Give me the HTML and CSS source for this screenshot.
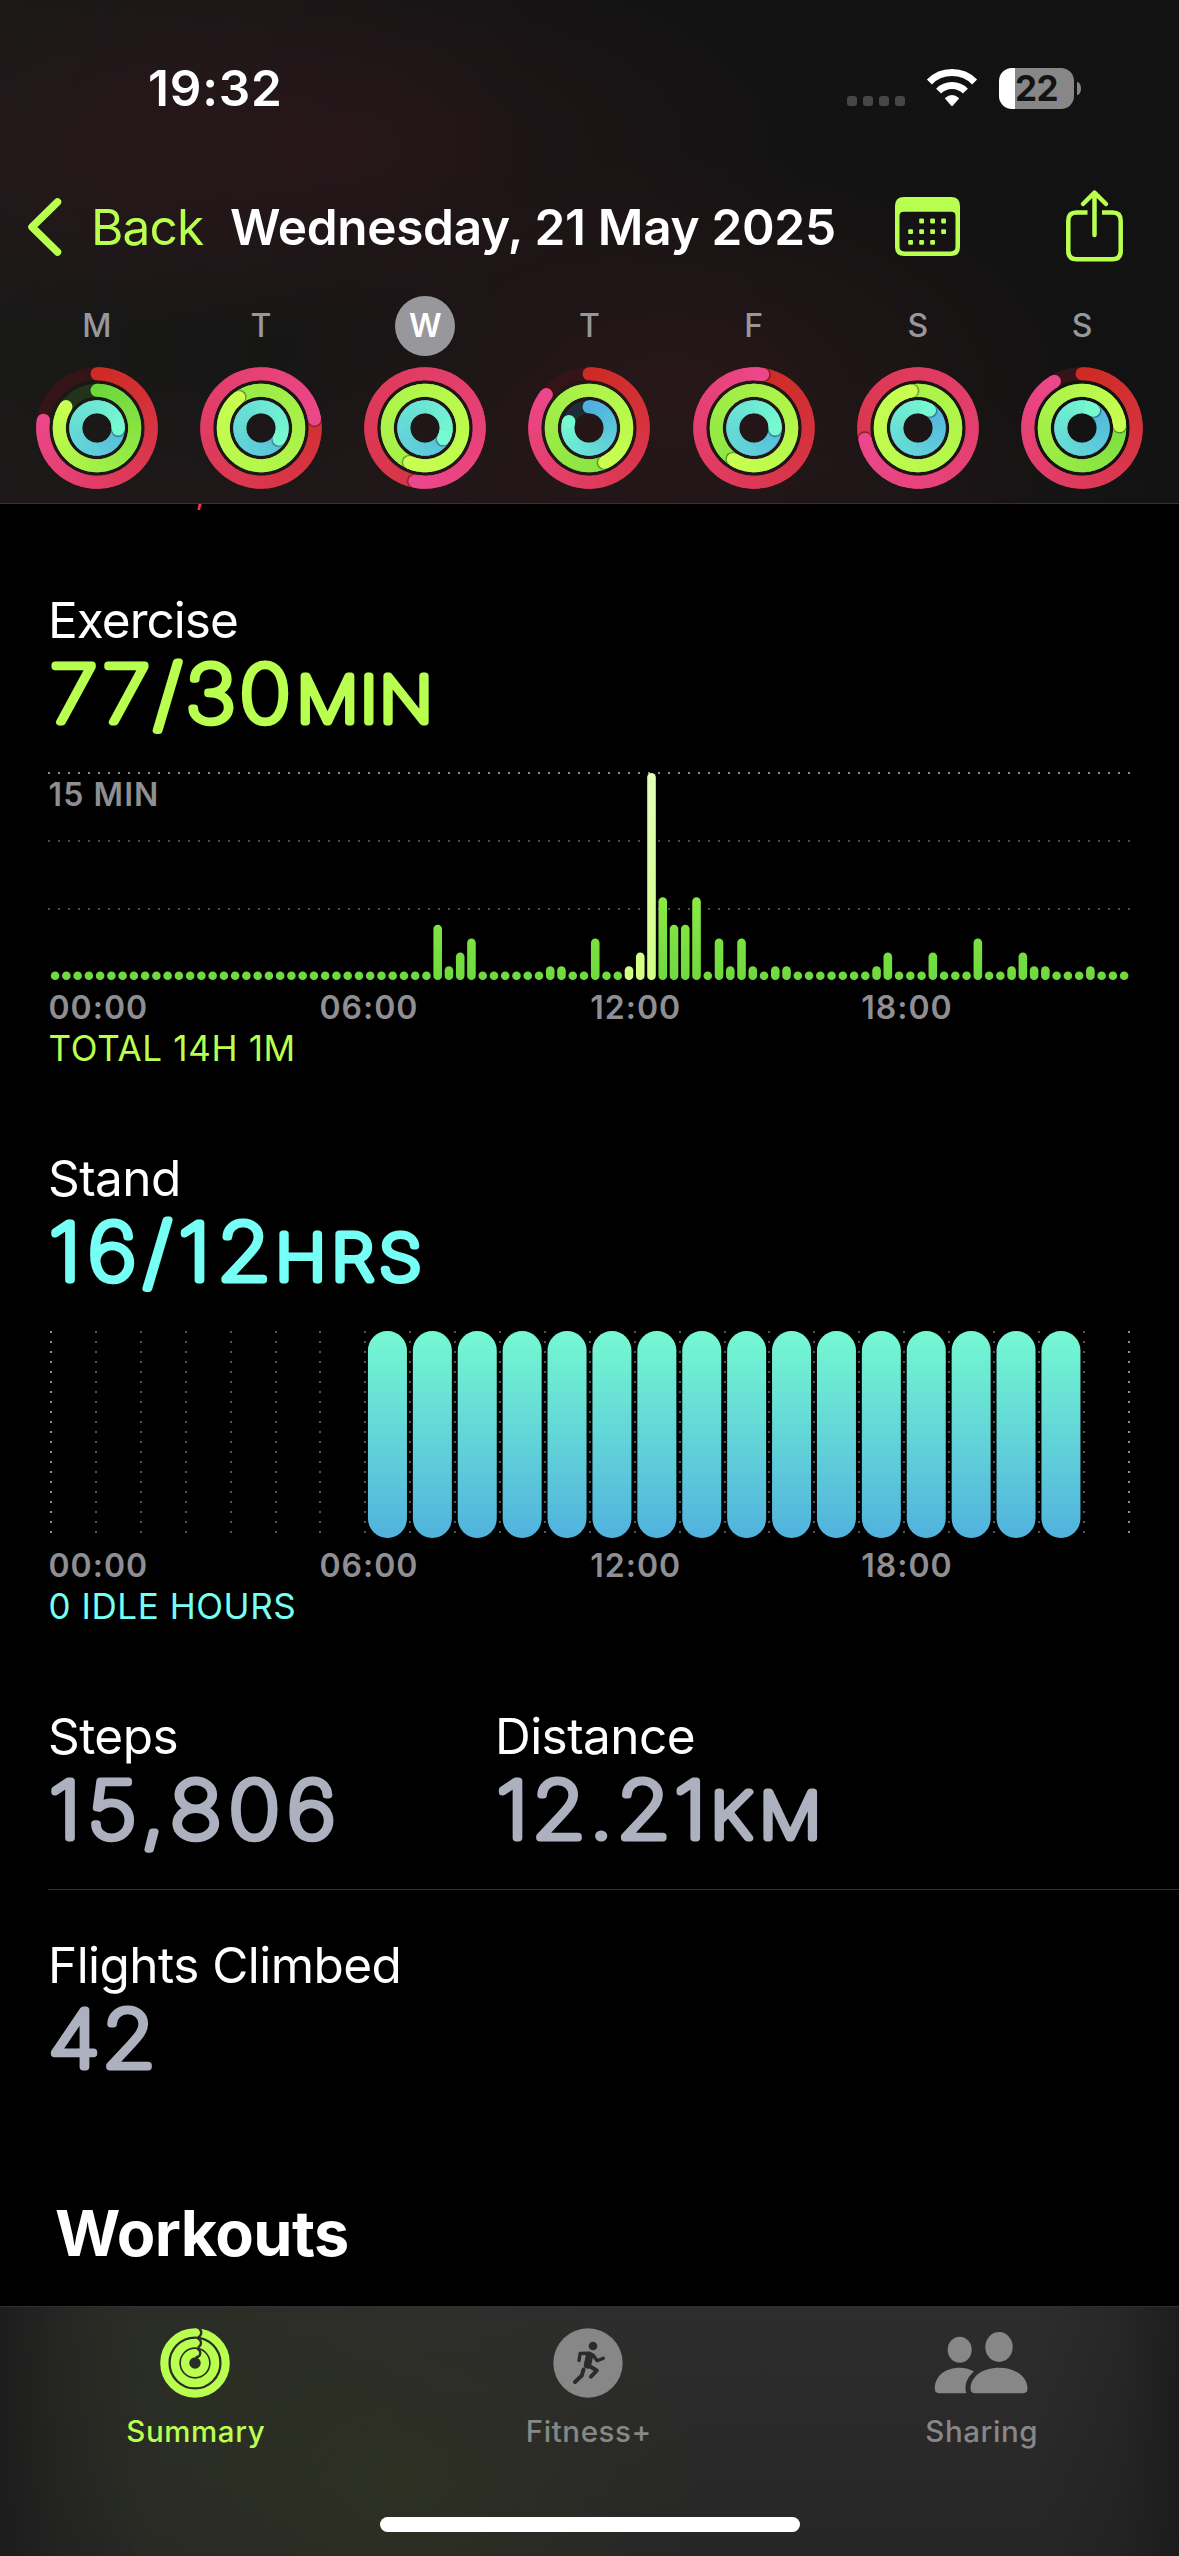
FILE: index.html
```html
<!DOCTYPE html>
<html lang="en">
<head>
<meta charset="utf-8">
<title>Activity Summary</title>
<link rel="stylesheet" href="styles.css">
</head>
<body>
<div class="screen">
  <header class="header">
    <div class="status">
      <span class="time">19:32</span>
      <div class="cell"><i></i><i></i><i></i><i></i></div>
      <svg class="wifi" width="50" height="38" viewBox="0 0 50 38">
        <g fill="none" stroke="#fff" stroke-width="7">
          <path d="M2.4 12.9A32 32 0 0 1 47.6 12.9"/>
          <path d="M11.6 22.1A18.9 18.9 0 0 1 38.4 22.1"/>
        </g>
        <path d="M17.8 29.2Q25 23 32.200 29.200L26 36.400Q25 37.400 24 36.400Z" fill="#fff"/>
      </svg>
      <div class="battery"><span>22</span></div>
      <i class="battery-cap"></i>
    </div>

    <nav class="nav">
      <svg class="chevron" width="40" height="60" viewBox="0 0 40 60"><path d="M31.500 5L6 30L31.500 55" fill="none" stroke="#b9ff50" stroke-width="7.500" stroke-linecap="round" stroke-linejoin="round"/></svg>
      <span class="back">Back</span>
      <h1 class="date">Wednesday, 21 May 2025</h1>
      <svg class="calendar" width="66" height="60" viewBox="0 0 66 60">
        <path fill="#b9ff50" fill-rule="evenodd" d="M9 0H56Q65 0 65 9V50Q65 59 56 59H9Q0 59 0 50V9Q0 0 9 0ZM8.500 14.800Q4.500 14.800 4.500 18.800V49.500Q4.500 54.400 9.400 54.400H55.600Q60.500 54.400 60.500 49.500V18.800Q60.500 14.800 56.500 14.800Z"/>
        <g fill="#b9ff50">
          <rect x="24.200" y="21.600" width="4.800" height="4.800" rx="1"/><rect x="35.200" y="21.600" width="4.800" height="4.800" rx="1"/><rect x="46.200" y="21.600" width="4.800" height="4.800" rx="1"/>
          <rect x="13.200" y="32.200" width="4.800" height="4.800" rx="1"/><rect x="24.200" y="32.200" width="4.800" height="4.800" rx="1"/><rect x="35.200" y="32.200" width="4.800" height="4.800" rx="1"/><rect x="46.200" y="32.200" width="4.800" height="4.800" rx="1"/>
          <rect x="13.200" y="42.900" width="4.800" height="4.800" rx="1"/><rect x="24.200" y="42.900" width="4.800" height="4.800" rx="1"/><rect x="35.200" y="42.900" width="4.800" height="4.800" rx="1"/>
        </g>
      </svg>
      <svg class="share" width="58" height="72" viewBox="0 0 58 72">
        <g fill="none" stroke="#b9ff50" stroke-width="4.500">
          <path d="M21.500 21.500H10.500Q2.300 21.500 2.300 29.700V60Q2.300 68.200 10.500 68.200H46.500Q54.700 68.200 54.700 60V29.700Q54.700 21.500 46.500 21.500H36"/>
          <path d="M28.500 2.500V44M17 13L28.500 1.700L40 13" stroke-linecap="round" stroke-linejoin="round"/>
        </g>
      </svg>
    </nav>

    <div class="week" id="week"></div>
  </header>

  <main class="content">
    <p class="footnote move">TOTAL 2,434KCAL</p>

    <section class="metric">
      <h2 class="label tight">Exercise</h2>
      <svg class="value lime" width="420" height="88"><text x="0" y="72.200" letter-spacing="3.400">77/30</text><text class="unit" x="224.300" y="72.200" letter-spacing="1.900">MIN</text></svg>
      <div class="chart minutes">
        <span class="scale">15 MIN</span>
        <svg class="plot" id="minutes" width="1083" height="208"></svg>
      </div>
      <div class="axis"><span>00:00</span><span>06:00</span><span>12:00</span><span>18:00</span></div>
      <p class="footnote lime">TOTAL 14H 1M</p>
    </section>

    <section class="metric">
      <h2 class="label">Stand</h2>
      <svg class="value aqua" width="420" height="88"><text x="-1" y="72.200" letter-spacing="6.400">16/12</text><text class="unit" x="205" y="72.200" letter-spacing="5">HRS</text></svg>
      <div class="chart">
        <svg class="plot" id="hours" width="1083" height="208"></svg>
      </div>
      <div class="axis"><span>00:00</span><span>06:00</span><span>12:00</span><span>18:00</span></div>
      <p class="footnote aqua idle">0 IDLE HOURS</p>
    </section>

    <section class="metric pair">
      <div>
        <h2 class="label">Steps</h2>
        <svg class="value slate" width="420" height="88"><text x="-1" y="72.200" letter-spacing="6.500">15,806</text></svg>
      </div>
      <div>
        <h2 class="label">Distance</h2>
        <svg class="value slate" width="420" height="88"><text x="-0.500" y="72.200" letter-spacing="3.500">12.21</text><text class="unit" x="194.300" y="72.200" letter-spacing="7">KM</text></svg>
      </div>
    </section>

    <section class="metric flights">
      <h2 class="label">Flights Climbed</h2>
      <svg class="value slate" width="420" height="88"><text x="-1.500" y="72.200" letter-spacing="2">42</text></svg>
    </section>

    <h2 class="workouts">Workouts</h2>
  </main>

  <footer class="tabbar">
    <div class="tabs">
      <div class="tab active">
        <svg width="70" height="70" viewBox="-35 -35 70 70">
          <g fill="none" stroke="#b9ff50">
            <circle r="30.700" stroke-width="8.200"/><circle r="20" stroke-width="8.600"/><circle r="9.900" stroke-width="8.300"/>
          </g>
          <path d="M2.500 -36Q6.300 -33.500 6.300 -30.500Q6.300 -27.500 3 -25.500M2.500 -25Q6 -23 6 -20Q6 -17.500 3 -15.500M2 -14.500Q5.300 -13 5.300 -10Q5.300 -6 0.500 -5.700" fill="none" stroke="#2b2e26" stroke-width="2.300"/>
        </svg>
        <span>Summary</span>
      </div>
      <div class="tab">
        <svg width="70" height="70" viewBox="-35 -35 70 70">
          <circle r="34.700" fill="#868786"/>
          <g fill="none" stroke="#2b2b2b" stroke-linecap="round" stroke-linejoin="round">
            <circle cx="5" cy="-17" r="4.300" fill="#2b2b2b" stroke="none"/>
            <path d="M1.500 -7.500L-0.500 2" stroke-width="7.400"/>
            <path d="M1.500 -9.800L-7.800 -9.500L-9 -2.500M5 -8L9.200 -2.200L15.300 -4.700" stroke-width="3.400"/>
            <path d="M0.500 2.500L8.800 7.500L3 13.700" stroke-width="4"/>
            <path d="M-4.500 6.500L-6.200 12.500L-13 19" stroke-width="4"/>
          </g>
        </svg>
        <span>Fitness+</span>
      </div>
      <div class="tab">
        <svg width="94" height="70" viewBox="0 0 94 70">
          <g fill="#868786">
            <ellipse cx="65" cy="19" rx="13.700" ry="15"/>
            <ellipse cx="25.700" cy="21.700" rx="12" ry="13"/>
            <path d="M36.500 60.500C36.500 49 48 39.700 65 39.700S93.500 49 93.500 60.500Q93.500 65.300 88.500 65.300H41.500Q36.500 65.300 36.500 60.500Z"/>
            <path d="M0.800 60.500C0.800 49 10 39.700 25.700 39.700Q34 39.700 40 43.500C34.500 48 31.500 54 31.500 60Q31.500 63 32.300 65.300H5.500Q0.800 65.300 0.800 60.500Z"/>
          </g>
        </svg>
        <span>Sharing</span>
      </div>
    </div>
    <i class="home"></i>
  </footer>
</div>
<script src="app.js"></script>
</body>
</html>
```
FILE: styles.css
```css
* { box-sizing: border-box; margin: 0; padding: 0; }

body {
  background: #000;
  color: #fff;
  font-family: Inter, "Liberation Sans", sans-serif;
}

svg { display: block; overflow: visible; flex: none; }

.screen {
  width: 1179px;
  height: 2556px;
  display: flex;
  flex-direction: column;
  overflow: hidden;
}

/* Header */
.header {
  height: 504px;
  flex: none;
  padding-top: 58px;
  border-bottom: 1px solid #333131;
  background:
    radial-gradient(ellipse 380px 200px at 150px 145px, rgba(42, 23, 27, .6), rgba(42, 23, 27, 0)),
    radial-gradient(ellipse 460px 200px at 350px 145px, rgba(42, 22, 26, .75), rgba(42, 22, 26, 0)),
    radial-gradient(ellipse 420px 240px at 670px 390px, rgba(42, 23, 25, .9), rgba(42, 23, 25, 0)),
    radial-gradient(ellipse 900px 140px at 400px 500px, rgba(34, 24, 26, .8), rgba(34, 24, 26, 0)),
    linear-gradient(90deg, #191918, #131313 45%, #121212);
}

.status {
  height: 60px;
  display: flex;
  align-items: center;
  padding: 0 98px 0 148px;
}

.time { font-size: 49.5px; font-weight: 600; line-height: 60px; letter-spacing: .8px; }

.cell { display: flex; gap: 6px; margin: 26px 22px 0 auto; }
.cell i { width: 10px; height: 10px; border-radius: 3px; background: #474747; }

.wifi { margin-right: 22.500px; }

.battery {
  width: 75px;
  height: 41px;
  border-radius: 13px;
  background: linear-gradient(90deg, #fff 16.500px, #878787 16.500px);
  text-align: center;
}
.battery span { color: #131313; font-size: 35px; font-weight: 700; line-height: 41px; letter-spacing: -.5px; }
.battery-cap { width: 4px; height: 13px; margin-left: 3px; border-radius: 0 4px 4px 0 / 0 7px 7px 0; background: #878787; }

.nav {
  display: flex;
  align-items: center;
  height: 60px;
  margin-top: 79px;
  padding-left: 25.500px;
}
.back { margin-left: 25.500px; width: 139px; color: #b9ff50; font-size: 49.5px; line-height: 60px; letter-spacing: -.8px; }
.date { width: 665px; font-size: 49.5px; font-weight: 600; line-height: 60px; letter-spacing: -.3px; white-space: nowrap; }
.calendar { margin-right: 105px; }

.week {
  display: grid;
  grid-template-columns: repeat(7, 1fr);
  justify-items: center;
  padding: 0 14.7px;
  margin-top: 39px;
}
.day { display: flex; flex-direction: column; align-items: center; gap: 11px; }
.day span {
  width: 60px;
  height: 60px;
  border-radius: 50%;
  color: #98979c;
  font-size: 32px;
  font-weight: 500;
  line-height: 59px;
  text-align: center;
}
.day .today { background: #98979c; color: #fff; font-weight: 600; }

/* Scrolling content */
.content { flex: 1; min-height: 0; overflow: hidden; padding-left: 48px; }

.label { font-size: 49.5px; font-weight: 400; line-height: 60px; letter-spacing: -.55px; white-space: nowrap; }
.tight { letter-spacing: -.96px; }

.value { height: 88px; margin-left: 2px; }
.value text {
  transform: scale(1.1, 1);
  font-size: 78.6px;
  font-weight: 100;
  fill: currentColor;
  stroke: currentColor;
  stroke-width: 7px;
  stroke-linejoin: round;
}
.value .unit { font-size: 62.5px; }

.lime { color: #b9ff50; }
.aqua { color: #76fff5; }
.slate { color: #adb1bf; }
.move { color: #e23b5f; margin-top: -33.700px; margin-bottom: 78px; }

.chart { height: 208px; margin-top: 34px; display: grid; }
.chart > * { grid-area: 1 / 1; }
.scale { padding: 2.400px 0 0 .5px; color: #8e8e93; font-size: 32px; font-weight: 600; line-height: 40px; letter-spacing: 1.1px; }

.axis {
  display: grid;
  grid-template-columns: repeat(4, 270.9px);
  margin-top: 8px;
  margin-bottom: -1px;
  padding-left: .5px;
  color: #8e8e93;
  font-size: 32px;
  font-weight: 600;
  line-height: 40px;
  letter-spacing: 1px;
}

.footnote { padding-left: .5px; font-size: 35px; line-height: 42px; letter-spacing: .68px; white-space: nowrap; }
.idle { letter-spacing: .56px; }

.metric + .metric { margin-top: 79px; }

.pair { display: grid; grid-template-columns: 447px 1fr; padding-bottom: 35px; border-bottom: 1px solid #303032; }
.content .flights { margin-top: 45px; }

.workouts { margin-top: 112px; padding-left: 7px; font-size: 63px; line-height: 76px; letter-spacing: -.59px; }

/* Tab bar */
.tabbar {
  height: 250px;
  flex: none;
  display: flex;
  flex-direction: column;
  align-items: center;
  justify-content: space-between;
  padding: 21px 0 24px;
  border-top: 1px solid #303030;
  background:
    linear-gradient(90deg, rgba(26, 26, 26, .85), rgba(26, 26, 26, .35) 5%, rgba(26, 26, 26, 0) 12%, rgba(26, 26, 26, 0) 88%, rgba(26, 26, 26, .3) 95%, rgba(26, 26, 26, .85)),
    radial-gradient(ellipse 300px 240px at 400px 180px, rgba(46, 49, 35, .9), rgba(46, 49, 35, 0)),
    radial-gradient(ellipse 260px 240px at 180px 90px, rgba(42, 46, 34, .9), rgba(42, 46, 34, 0)),
    linear-gradient(180deg, #2d2d2d, #262626);
}
.tabs { width: 100%; display: grid; grid-template-columns: repeat(3, 1fr); }
.tab { display: flex; flex-direction: column; align-items: center; gap: 15px; color: #868786; }
.tab svg { margin-right: 2.500px; }
.tab span { margin-right: 1.500px; font-size: 29.5px; font-weight: 500; line-height: 36px; letter-spacing: .6px; }
.active { color: #b9ff50; }
.home { width: 420px; height: 15px; border-radius: 8px; background: #fff; }
```
FILE: app.js
```javascript
const NS = 'http://www.w3.org/2000/svg';

function add(parent, tag, attrs) {
  const el = document.createElementNS(NS, tag);
  for (const key in attrs) el.setAttribute(key, attrs[key]);
  parent.appendChild(el);
  return el;
}

// Activity rings: progress is in laps, so 1.5 is a full ring and a half.
const RINGS = [
  { r: 54.2, from: [205, 43, 35], to: [236, 71, 138], track: '#351417' },
  { r: 37.7, from: [108, 216, 60], to: [200, 255, 80], track: '#21331a' },
  { r: 21.2, from: [80, 176, 224], to: [118, 250, 208], track: '#1d2d36' }
];
const WIDTH = 13;

const DAYS = [
  ['M', 0.773, 0.846, 1.258],
  ['T', 1.224, 1.9, 1.338],
  ['W', 1.53, 2.567, 1.335],
  ['T', 0.856, 1.432, 0.8],
  ['F', 1.026, 1.593, 1.258],
  ['S', 1.717, 2.972, 1.092],
  ['S', 0.915, 1.24, 1.092]
];

function mix(ring, t) {
  return 'rgb(' + ring.from.map((c, i) => Math.round(c + (ring.to[i] - c) * t)).join(',') + ')';
}

function point(r, lap) {
  const a = lap * 2 * Math.PI;
  return [r * Math.sin(a), -r * Math.cos(a)];
}

function drawRing(svg, ring, progress, id) {
  add(svg, 'circle', { r: ring.r, fill: 'none', stroke: ring.track, 'stroke-width': WIDTH });
  const start = Math.max(0, progress - 1);
  const steps = 120;
  if (start === 0) {
    const [x, y] = point(ring.r, 0);
    add(svg, 'circle', { cx: x, cy: y, r: WIDTH / 2, fill: mix(ring, 0) });
  }
  for (let i = 0; i < steps; i++) {
    const a = start + (progress - start) * i / steps;
    const b = Math.min(progress, a + (progress - start) / steps + 0.006);
    const [x1, y1] = point(ring.r, a);
    const [x2, y2] = point(ring.r, b);
    add(svg, 'path', {
      d: `M${x1} ${y1}A${ring.r} ${ring.r} 0 0 1 ${x2} ${y2}`,
      fill: 'none', stroke: mix(ring, a / progress), 'stroke-width': WIDTH
    });
  }
  const [hx, hy] = point(ring.r, progress);
  if (progress > 1) {
    const clip = add(svg, 'clipPath', { id });
    const o = ring.r + WIDTH / 2;
    const n = ring.r - WIDTH / 2;
    add(clip, 'path', {
      'clip-rule': 'evenodd',
      d: `M0 ${-o}A${o} ${o} 0 1 1 0 ${o}A${o} ${o} 0 1 1 0 ${-o}ZM0 ${-n}A${n} ${n} 0 1 1 0 ${n}A${n} ${n} 0 1 1 0 ${-n}Z`
    });
    const [sx, sy] = point(ring.r, progress + 0.8 / (2 * Math.PI * ring.r));
    const shade = add(svg, 'g', { 'clip-path': `url(#${id})` });
    add(shade, 'circle', { cx: sx, cy: sy, r: 7.6, fill: '#000', opacity: 0.14 });
    add(shade, 'circle', { cx: sx, cy: sy, r: 6.8, fill: '#000', opacity: 0.3 });
    // The shadow must only fall ahead of the head, so the tail is painted back over it.
    const [bx, by] = point(ring.r, progress - 9 / (2 * Math.PI * ring.r));
    add(svg, 'path', {
      d: `M${bx} ${by}A${ring.r} ${ring.r} 0 0 1 ${hx} ${hy}`,
      fill: 'none', stroke: mix(ring, 0.985), 'stroke-width': WIDTH
    });
  }
  add(svg, 'circle', { cx: hx, cy: hy, r: WIDTH / 2, fill: mix(ring, 1) });
}

const week = document.getElementById('week');
DAYS.forEach(([name, ...laps], d) => {
  const day = document.createElement('div');
  day.className = 'day';
  const label = document.createElement('span');
  label.textContent = name;
  if (d === 2) label.className = 'today';
  day.appendChild(label);
  const svg = add(day, 'svg', { width: 122, height: 122, viewBox: '-61 -61 122 122' });
  RINGS.forEach((ring, i) => drawRing(svg, ring, laps[i], `ring-${d}-${i}`));
  week.appendChild(day);
});

// Exercise minutes in 15-minute slots, midnight to midnight.
const minutes = new Array(96).fill(0);
Object.assign(minutes, {
  34: 4, 35: 1, 36: 2, 37: 3, 44: 1, 45: 1, 48: 3, 51: 1, 52: 2, 53: 15, 54: 6, 55: 4,
  56: 4, 57: 6, 59: 3, 60: 1, 61: 3, 62: 1, 64: 1, 65: 1, 73: 1, 74: 2, 78: 2, 82: 3,
  85: 1, 86: 2, 87: 1, 88: 1, 92: 1
});

function gradient(svg, id, bottom, top) {
  const g = add(svg, 'linearGradient', { id, gradientUnits: 'userSpaceOnUse', x1: 0, y1: 208, x2: 0, y2: 0 });
  add(g, 'stop', { offset: 0, 'stop-color': bottom });
  add(g, 'stop', { offset: 1, 'stop-color': top });
}

const plot = document.getElementById('minutes');
gradient(plot, 'move-bar', '#6ed93e', '#b9ff50');
gradient(plot, 'workout-bar', '#d3ff84', '#e3ffba');
[[1, '#8f8f8f'], [69, '#4d4d4d'], [137, '#4d4d4d']].forEach(([y, stroke]) => {
  add(plot, 'path', { d: `M0 ${y}H1082`, stroke, 'stroke-width': 2, 'stroke-dasharray': '2 8' });
});
minutes.forEach((value, i) => {
  const h = value ? value * 13.8 : 8.6;
  const fill = i >= 51 && i <= 53 ? 'url(#workout-bar)' : 'url(#move-bar)';
  add(plot, 'rect', { x: 7.1 + i * 11.253 - 4.3, y: 208 - h, width: 8.6, height: h, rx: 4.3, fill });
});

// Stand hours: the slots with at least one minute on foot.
const hours = document.getElementById('hours');
gradient(hours, 'stand-bar', '#51b2de', '#75f9d1');
for (let i = 0; i <= 24; i++) {
  const edge = i === 0 || i === 24;
  add(hours, 'path', {
    d: `M${Math.round(3 + i * 44.9)} 1V203`,
    stroke: edge ? '#8f8f8f' : '#555', 'stroke-width': 2, 'stroke-dasharray': '2 8'
  });
}
for (let i = 7; i < 23; i++) {
  add(hours, 'rect', { x: 3 + (i + 0.5) * 44.9 - 19.8, y: 1, width: 39, height: 207, rx: 19.5, fill: 'url(#stand-bar)' });
}
```
